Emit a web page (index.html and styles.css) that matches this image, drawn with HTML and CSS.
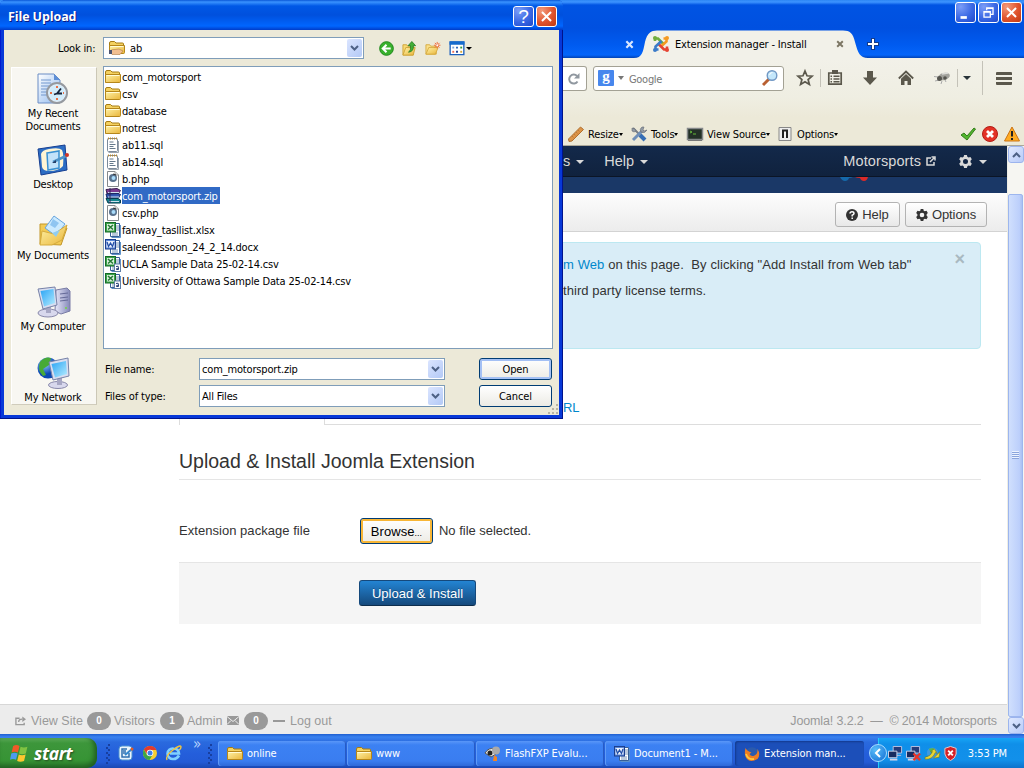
FILE: index.html
```html
<!DOCTYPE html>
<html lang="en">
<head>
<meta charset="utf-8">
<title>Extension manager - Install</title>
<link rel="stylesheet" href="styles.css">
</head>
<body>
<svg class="defs" width="0" height="0" aria-hidden="true">
  <defs>
    <linearGradient id="gold" x1="0" y1="0" x2="1" y2="1"><stop offset="0" stop-color="#fff3a8"/><stop offset="1" stop-color="#e9b53a"/></linearGradient>
    <linearGradient id="screen" x1="0" y1="0" x2="1" y2="1"><stop offset="0" stop-color="#2aa4f4"/><stop offset="1" stop-color="#b5ecff"/></linearGradient>
    <linearGradient id="metal" x1="0" y1="0" x2="1" y2="0"><stop offset="0" stop-color="#e8e8fa"/><stop offset="1" stop-color="#8388b8"/></linearGradient>
    <linearGradient id="sheet" x1="0" y1="0" x2="1" y2="1"><stop offset="0" stop-color="#fff"/><stop offset="1" stop-color="#8fb8ee"/></linearGradient>
    <radialGradient id="globe" cx=".35" cy=".3"><stop offset="0" stop-color="#9ad2ff"/><stop offset="1" stop-color="#0b48b4"/></radialGradient>
    <symbol id="folder" viewBox="0 0 16 16"><path d="M.5 13V3Q.5 1.500 2 1.500h3.500L7 3h6.500q1 0 1 1v9z" fill="#f4d160" stroke="#a67c14"/><path d="M.5 13.500V5.500h15v7q0 1-1 1z" fill="url(#gold)" stroke="#b5861a"/><path d="M1.500 6.500h13" stroke="#fffbd5"/></symbol>
    <symbol id="sql" viewBox="0 0 16 16"><rect x="2.500" y="1.500" width="10" height="13" rx="1" fill="#fff" stroke="#7b8a9a"/><path d="M13.500 4v11.500h-10" fill="none" stroke="#9aa4ae"/><path d="M4.500 5h4M4.500 7.500h6M4.500 9.500h4M4.500 11.500h6" stroke="#65798b"/><path d="M3 1.500h10" stroke="#b88932" stroke-width="2" stroke-dasharray="1 1"/></symbol>
    <symbol id="php" viewBox="0 0 16 16"><path d="M2.500.5h7.500l3.500 3.500v11.500h-11z" fill="#fff" stroke="#85898c"/><path d="M10 .5V4h3.500" fill="#ddd" stroke="#999"/><circle cx="8" cy="7" r="4" fill="#58718d"/><circle cx="8.500" cy="7" r="2" fill="#a8dbfa"/><path d="M8 3l3 1" stroke="#333"/></symbol>
    <symbol id="zip" viewBox="0 0 16 16"><path d="M1 1.500l11-1 3.500 2-2 3H2z" fill="#7d3b91" stroke="#39204f"/><path d="M1 6l12-.5 2.500 1-2 3.500H2z" fill="#3358b3" stroke="#1b2863"/><path d="M1 10.500h12l2.500 1.500v3H3z" fill="#16868e" stroke="#073d50"/><path d="M3 4.500h11M3 9h11M4 13.500h10" stroke="#cfe3ef"/><path d="M5 0v15" stroke="#30265d"/></symbol>
    <symbol id="xls" viewBox="0 0 16 16"><path d="M5.500 1.500h9v13h-9z" fill="#fff" stroke="#375f98"/><path d="M15.500 3v12.500h-9" stroke="#5d91c8" fill="none"/><path d="M11 4h3M11 6h3M11 8h3M7 11h6M7 13h6" stroke="#7795ba"/><rect x=".5" y=".5" width="10" height="9.500" fill="#3ba349" stroke="#166b28"/><rect x="2" y="2" width="7" height="6.500" fill="#dff2e0"/><path d="M3 3l5 4.500M8 3L3 7.500" stroke="#257a35" stroke-width="1.600"/></symbol>
    <symbol id="csv" viewBox="0 0 16 16"><use href="#xls"/><rect x="9.500" y="8" width="6" height="7.500" fill="#fff" stroke="#5f7fa8"/><path d="M11 10.500q3-1 2.500 1v2h-2q-1-1 2-1.500" fill="none" stroke="#253e78"/></symbol>
    <symbol id="doc" viewBox="0 0 16 16"><path d="M5.500 1.500h9v13h-9z" fill="#fff" stroke="#375f98"/><path d="M15.500 3v12.500h-9" stroke="#5d91c8" fill="none"/><path d="M11 4h3M11 6h3M11 8h3M7 11h6M7 13h6" stroke="#7795ba"/><rect x=".5" y=".5" width="10" height="9.500" fill="#5a87d6" stroke="#1c3f8e"/><rect x="1.500" y="2" width="8" height="6.500" fill="#e9f0fc"/><path d="M2 3l1.500 4.500 2-3.500 2 3.500L9 3" fill="none" stroke="#2350a8" stroke-width="1.300"/></symbol>
    <symbol id="monitor" viewBox="0 0 32 32"><ellipse cx="11" cy="27" rx="10" ry="4" fill="#d8d8ed" stroke="#8888aa"/><path d="M9 19h5v8H9z" fill="#a7a7c4"/><path d="M1 3l17-2 2 18-14 4z" fill="#d8ddf0" stroke="#7782a8"/><path d="M3.500 5l13-2 1.500 14-11 3.500z" fill="url(#screen)"/></symbol>
    <symbol id="chev" viewBox="0 0 9 6"><path d="M1 1l3.500 3.500L8 1" fill="none" stroke="#4d6185" stroke-width="2"/></symbol>
    <symbol id="cog" viewBox="0 0 14 14"><path fill-rule="evenodd" d="M5.500 0h3l.5 2 1.300.7 2-.6L13.800 4.700 12.400 6.200v1.600l1.400 1.500-1.500 2.600-2-.6-1.300.7-.5 2h-3l-.5-2-1.300-.7-2 .6L.2 9.300l1.400-1.500V6.200L.2 4.700l1.500-2.600 2 .6L5 2zM7 4.300a2.700 2.700 0 100 5.400 2.700 2.700 0 000-5.400z"/></symbol>
    <symbol id="pcs" viewBox="0 0 16 16"><path d="M5.500.5h9v7h-9z" fill="#253b78" stroke="#c0c5e3"/><path d="M9 8v2h5" stroke="#b8bddb" fill="none"/><path d="M.5 5.500h9v7h-9z" fill="#182b60" stroke="#d4d7ec"/><path d="M2 14.500h8" stroke="#d0d3e9" stroke-width="2"/></symbol>
    <symbol id="close" viewBox="0 0 10 10"><path d="M1.500 1.500l7 7M8.500 1.500l-7 7" fill="none" stroke="currentColor" stroke-width="2.400"/></symbol>
  </defs>
</svg>

<div class="desktop">
<div class="browser">
  <div class="tabstrip">
    <svg class="old-close" viewBox="0 0 10 10"><use href="#close"/></svg>
    <div class="tab">
      <svg class="tab-shape" viewBox="0 0 234 28"><path d="M0 28C8 28 9 22 11 12C13 3 17 .5 23 .5H209C216 .5 219 3 221 12C224 23 226 28 234 28z" fill="#f2f1e9"/></svg>
      <svg class="joomla" viewBox="0 0 16 16" fill="none" stroke-width="2.600"><path d="M2 5V2.500h3L11 8.500" stroke="#72ad3e"/><path d="M10.500 2.500h3v3L7.500 11" stroke="#f59a23"/><path d="M14 10.500v3h-3L5 7.500" stroke="#e64433"/><path d="M5.500 13.500h-3v-3L8.500 5" stroke="#3b7bc8"/><g stroke="none"><circle cx="2" cy="2" r="2" fill="#72ad3e"/><circle cx="14" cy="2" r="2" fill="#f59a23"/><circle cx="14" cy="14" r="2" fill="#e64433"/><circle cx="2" cy="14" r="2" fill="#3b7bc8"/></g></svg>
      <span class="ui tab-title">Extension manager - Install</span>
      <svg class="tab-close" viewBox="0 0 10 10"><use href="#close"/></svg>
    </div>
    <svg class="newtab" viewBox="0 0 12 12"><path d="M6 0v12M0 6h12" stroke="#123b8b" stroke-width="4"/><path d="M6 1v10M1 6h10" stroke="#fff" stroke-width="2"/></svg>
    <div class="winbtns">
      <span class="wb"><svg viewBox="0 0 21 21"><path d="M5 16h7" stroke="#fff" stroke-width="3"/></svg></span>
      <span class="wb"><svg viewBox="0 0 21 21"><path d="M8.500 8V5.500h7v7H13M5.500 9.500h7v6h-7zM8 6h8M5 10h8" fill="none" stroke="#fff" stroke-width="1.400"/></svg></span>
      <span class="wb red"><svg viewBox="0 0 21 21"><path d="M5.500 5.500l10 10M15.500 5.500l-10 10" stroke="#fff" stroke-width="2.200"/></svg></span>
    </div>
  </div>

  <div class="navbar">
    <div class="urlend"><svg viewBox="0 0 12 12"><path d="M9.500 8.500A4.500 4.500 0 119 3" fill="none" stroke="#9098a0" stroke-width="2"/><path d="M11.500 0v5.500H6z" fill="#9098a0"/></svg></div>
    <div class="search">
      <span class="g">g</span><i class="tri grey"></i><span class="ui google">Google</span>
      <svg class="lens" viewBox="0 0 16 16"><path d="M1 15l6-6" stroke="#b96032" stroke-width="3"/><circle cx="10" cy="5.500" r="4.800" fill="#c4e7fb" stroke="#7198c4" stroke-width="1.400"/><path d="M7.500 5q.5-2.500 3-2.500" stroke="#fff" fill="none"/></svg>
    </div>
    <svg class="nv star" viewBox="0 0 16 16"><path d="M8 1l2 4.800 5 .4-3.900 3.300 1.300 5L8 11.800l-4.400 2.700 1.300-5L1 6.200l5-.4z" fill="none" stroke="#5b584c" stroke-width="1.700"/></svg>
    <i class="vsep s1"></i>
    <svg class="nv clip" viewBox="0 0 16 16"><path d="M1.800 3h12.400v11.200H1.800z" fill="none" stroke="#5b584c" stroke-width="1.700"/><path d="M5 0h6v4H5zM3.500 5.500h1.500v1.500H3.500zM6.500 5.500h6V7h-6zM3.500 8.300H5v1.500H3.500zM6.500 8.300h6v1.500h-6zM3.500 11H5v1.500H3.500zM6.500 11h6v1.500h-6z" fill="#5b584c"/></svg>
    <svg class="nv down" viewBox="0 0 16 16"><path d="M5 1h6v6.500h4L8 15 1 7.500h4z" fill="#5b584c"/></svg>
    <svg class="nv home" viewBox="0 0 16 16"><path d="M.8 8.500L8 1.500l7.200 7" fill="none" stroke="#5b584c" stroke-width="1.800"/><path d="M3 8.800L8 4l5 4.800V15H9.500v-4h-3v4H3z" fill="#5b584c"/></svg>
    <svg class="nv fly" viewBox="0 0 16 16"><path d="M0 6.500l4 .5M1 11l4-1M7 14l1-3M12 12l-1-2" fill="none" stroke="#aaa"/><ellipse cx="10" cy="6.500" rx="6" ry="3.500" transform="rotate(-15 10 6.500)" fill="#a2a29c"/><path d="M8 4l6-1" stroke="#dcdcd8" stroke-width="1.500"/><circle cx="5.500" cy="8.500" r="2.500" fill="#55554f"/><circle cx="11" cy="8" r="1.800" fill="#55554f"/></svg>
    <i class="vsep s2"></i><i class="tri dark"></i><i class="vsep tall"></i>
    <i class="burger"></i>
  </div>

  <div class="devbar ui">
    <svg class="d-icon" viewBox="0 0 16 16"><path d="M.5 13L12.500 1l3 2.500L4 15l-3 .500z" fill="#dc9448" stroke="#b07030"/><path d="M4 10l1.500 1.500M6 8l1.500 1.500M8 6l1.500 1.500M10 4l1.500 1.500" stroke="#b57535" stroke-width=".8"/></svg>
    <span class="w-resize">Resize<i class="tri tiny"></i></span>
    <svg class="d-icon" viewBox="0 0 16 16"><path d="M2 2l11 11" stroke="#777d84" stroke-width="2"/><path d="M9 9l5 5" stroke="#356eb5" stroke-width="4"/><path d="M2 14L11 5" stroke="#6f8fb8" stroke-width="3"/><path d="M10 6l2-2" stroke="#888" stroke-width="3"/><path d="M11 1q-3 2-1 5 4 2 6-2l-3 1-1-1 1-3zM1 2l3 1 1 2-2 1-2-1z" fill="#929ba5" stroke="#666c75" stroke-width=".6"/></svg>
    <span class="w-tools">Tools<i class="tri tiny"></i></span>
    <svg class="d-icon" viewBox="0 0 16 16"><path d="M.5 2.500h15v11H.5z" fill="#233026" stroke="#85888a" stroke-width="1.500"/><path d="M3 5l2 1-2 1M6 8h3" stroke="#65b93a" fill="none"/><path d="M1 14.500h14" stroke="#777"/></svg>
    <span class="w-view">View Source<i class="tri tiny"></i></span>
    <svg class="d-icon" viewBox="0 0 16 16"><path d="M2 1.500h12v13H2z" fill="#eee" stroke="#888"/><path d="M6 12V4.500h4V12" fill="none" stroke="#222" stroke-width="2"/><path d="M8 6v5" stroke="#fff"/><path d="M2 14.500h12" stroke="#888"/></svg>
    <span class="w-options">Options<i class="tri tiny"></i></span>
    <svg class="status" viewBox="0 0 16 16"><path d="M1 9l3-2 3 3 7-8 1.500 1L7 14z" fill="#52b52e" stroke="#337e19"/></svg>
    <svg class="status" viewBox="0 0 16 16"><circle cx="8" cy="8" r="7.500" fill="#e33226" stroke="#b21c14"/><path d="M5 5l6 6M11 5l-6 6" stroke="#fff" stroke-width="2.800"/></svg>
    <svg class="status" viewBox="0 0 16 16"><path d="M8 1l7.500 14H.5z" fill="#ffac23" stroke="#cb7414"/><path d="M8 5v5.500M8 12v2" stroke="#222" stroke-width="2"/></svg>
  </div>

  <div class="view">
    <div class="page">
      <div class="jnav"><span>s</span><i class="tri jt"></i><span class="jhelp">Help</span><i class="tri jt"></i>
        <span class="jsite">Motorsports</span>
        <svg class="ext" viewBox="0 0 10 10"><path d="M5 2H1v7h7V6M4 6l4-4M5.500 1H9v3.500" fill="none" stroke="#d9d9d9" stroke-width="1.500"/></svg>
        <svg class="jcog" viewBox="0 0 14 14" fill="#d9d9d9"><use href="#cog"/></svg><i class="tri jt last"></i></div>
      <div class="jhead"><svg viewBox="0 0 30 5"><path d="M1 0h13q-2 1-4 1-1 3-4 3T1 0z" fill="#1569aa"/><path d="M16 0h13q-1 4-4 4t-4-3q-3 0-5-1z" fill="#dc2a28"/></svg></div>
      <div class="subhead">
        <span class="btn b-help"><svg viewBox="0 0 12 12"><circle cx="6" cy="6" r="6" fill="#333"/><path d="M4 4.500Q4 2.800 6 2.800t2 1.700Q8 5.500 6.200 6.200V7.500M6.200 8.500V10" fill="none" stroke="#fff" stroke-width="1.500"/></svg>Help</span>
        <span class="btn b-opt"><svg viewBox="0 0 14 14" fill="#333"><use href="#cog"/></svg>Options</span>
      </div>
      <div class="alert">
        <p><span class="a1"><a>m Web</a> on this page.&nbsp; By clicking "Add Install from Web tab"</span></p>
        <p><span class="a2">third party license terms.</span></p>
        <span class="x">×</span>
      </div>
      <div class="tabs"><span class="tabs-active"></span><span class="tabs-rest"><a>RL</a></span></div>
      <div class="form">
        <h2><span>Upload &amp; Install Joomla Extension</span></h2>
        <div class="row"><span class="label">Extension package file</span><span class="browse">Browse<small>...</small></span><span class="nofile">No file selected.</span></div>
        <div class="actions"><span class="primary">Upload &amp; Install</span></div>
      </div>
      <div class="jfoot">
        <svg class="f-share" viewBox="0 0 12 10"><path d="M5 2H1v7h9V7M4 6q0-3 4-3" fill="none" stroke="#999" stroke-width="1.500"/><path d="M8 0l4 3-4 3z" fill="#999"/></svg>
        <span class="f1">View Site</span><b>0</b><span class="f2">Visitors</span><b>1</b><span class="f3">Admin</span>
        <svg class="f-mail" viewBox="0 0 12 9"><path d="M0 0h12v9H0z" fill="#999"/><path d="M0 .5l6 5 6-5M0 8.500l4-4M12 8.500l-4-4" stroke="#ededed" fill="none"/></svg>
        <b>0</b><i class="dash"></i><span class="f4">Log out</span>
        <span class="copy">Joomla! 3.2.2 &nbsp;— &nbsp;© 2014 Motorsports</span>
      </div>
    </div>
    <div class="scroll">
      <span class="sbtn"><svg class="up" viewBox="0 0 9 6"><use href="#chev"/></svg></span>
      <span class="thumb"><i></i></span>
      <span class="sbtn"><svg viewBox="0 0 9 6"><use href="#chev"/></svg></span>
    </div>
  </div>
</div>

<div class="taskbar ui">
  <div class="start"><svg viewBox="0 0 18 18"><path d="M3 2q3-2 6 0L7.500 8q-3-1.500-6 0z" fill="#f05a28"/><path d="M10 2.500q3 1.500 6.500 0L15 9q-3.500 1.500-6.500 0z" fill="#80c342"/><path d="M1.200 9q3-1.500 6 0L5.700 15q-3-1.500-5.700 0z" fill="#4d9bf0"/><path d="M8.300 10q3 1.500 6.500 0l-1.500 6q-3.500 1.500-6.500 0z" fill="#fdc72f"/></svg><span>start</span></div>
  <i class="grip"></i>
  <svg class="ql" viewBox="0 0 16 16"><rect x="1" y="1" width="13" height="14" rx="3" fill="#eaf4fb" stroke="#4f93d0"/><path d="M9 4H4v8h7V8M5 6h3M5 8h3" stroke="#2f6fb0" fill="none" stroke-width="1.500"/><path d="M7 10l7-6" stroke="#3387ce" stroke-width="2"/><circle cx="14" cy="4" r="1.500" fill="#e75a22"/></svg>
  <svg class="ql" viewBox="0 0 16 16"><circle cx="8" cy="8" r="7" fill="#f7ce30"/><path d="M1.900 4.500A7 7 0 0114.400 5H8L5 9z" fill="#e13a2d"/><path d="M1.900 4.500A7 7 0 007.500 15L10.500 10H5z" fill="#3ba648"/><circle cx="8" cy="8" r="3.300" fill="#fff"/><circle cx="8" cy="8" r="2.500" fill="#3d80ea"/></svg>
  <svg class="ql" viewBox="0 0 16 16"><path d="M13 10.500Q11 14 7.500 14A5.300 5.300 0 117.500 3.500q5 0 5.500 5H4" fill="none" stroke="#7fd0ff" stroke-width="2.600"/><path d="M1 15Q-1 11 7 5t8-3q0 2-2 3" fill="none" stroke="#f5c73d" stroke-width="1.400"/></svg>
  <span class="more">»</span>
  <i class="grip g2"></i>
  <div class="task t1"><svg viewBox="0 0 16 16"><use href="#folder"/></svg><span>online</span></div>
  <div class="task t2"><svg viewBox="0 0 16 16"><use href="#folder"/></svg><span>www</span></div>
  <div class="task t3"><svg viewBox="0 0 16 16"><path d="M0 7q4-6 9-4l2 5-5 3z" fill="#e5e5e2" stroke="#555"/><circle cx="5" cy="7" r="2.500" fill="#222"/><circle cx="11" cy="4.500" r="4" fill="#aaa"/><path d="M8 15l1-6 3 2v4z" fill="#f18425"/></svg><span>FlashFXP Evalu...</span></div>
  <div class="task t4"><svg viewBox="0 0 16 16"><use href="#doc"/></svg><span>Document1 - M...</span></div>
  <div class="task t5 active"><svg viewBox="0 0 16 16"><circle cx="8" cy="8" r="6.800" fill="#2a5aad"/><path d="M1.500 2Q-.5 9 3 13t10.500 0Q17 8.500 13.500 3q.5 5-3 6.500T5.500 8l2-1.500Q3 5 1.500 2z" fill="#ef7d22"/><path d="M2 8q2 6 8 5" fill="none" stroke="#ffc83e" stroke-width="1.800"/></svg><span>Extension man...</span></div>
  <div class="tray">
    <span class="collapse"><svg viewBox="0 0 8 10"><path d="M6 1L2 5l4 4" fill="none" stroke="#fff" stroke-width="2"/></svg></span>
    <svg class="ti" viewBox="0 0 16 16"><use href="#pcs"/></svg>
    <svg class="ti n2" viewBox="0 0 16 16"><use href="#pcs"/><path d="M8 8l7 7M15 8l-7 7" stroke="#e8352a" stroke-width="2.500"/></svg>
    <svg class="ti" viewBox="0 0 16 16"><circle cx="8" cy="7.500" r="6" fill="#3f9adf"/><path d="M4 3l5-1 2 4-4 2z" fill="#54b64d"/><path d="M0 12q6-1 8-6l-2 0 4-3 3 5-2-1Q8 15 0 14zM9 13l7-7-1 6z" fill="#ead431" stroke="#6b751e" stroke-width=".6"/></svg>
    <svg class="ti" viewBox="0 0 16 16"><path d="M8 .5l6 2v6q-1 5-6 7-5-2-6-7v-6z" fill="#d52027" stroke="#e8d1d1"/><path d="M5.500 5l5 5M10.500 5l-5 5" stroke="#fff" stroke-width="2"/></svg>
    <span class="clock">3:53 PM</span>
  </div>
</div>

<div class="dialog ui">
  <div class="dtitle"><span>File Upload</span><i class="wb q">?</i><i class="wb red"><svg viewBox="0 0 21 21"><path d="M5.500 5.500l10 10M15.500 5.500l-10 10" stroke="#fff" stroke-width="2.200"/></svg></i></div>
  <div class="dbody">
    <div class="lookin">
      <span class="look-label">Look in:</span>
      <div class="combo c-look"><svg class="ci" viewBox="0 0 16 16"><use href="#folder"/><path d="M1 11q2-2 5-1.500l4-.5 4 2-3 3.500H3z" fill="#f2bf91" stroke="#b07a45" stroke-width=".6"/><path d="M0 10h3v4H0z" fill="#4d5470"/></svg><span>ab</span><i class="drop"><svg viewBox="0 0 9 6"><use href="#chev"/></svg></i></div>
      <svg class="tool back" viewBox="0 0 16 16"><circle cx="8" cy="8" r="7.300" fill="#38b02c" stroke="#1b8418"/><path d="M12.500 8H5M8 4L4 8l4 4" fill="none" stroke="#fff" stroke-width="2.200"/></svg>
      <svg class="tool" viewBox="0 0 16 16"><path d="M1 15V4h4l1 1.500h6V15z" fill="#f7da74" stroke="#d0a437"/><path d="M1 15l3-8h10l-2 8z" fill="url(#gold)" stroke="#d0a437"/><path d="M7 12q3-2 2-7H6.500L10.500.5l4 4.500H12q1 6-5 7z" fill="#42ae38" stroke="#1b761c" stroke-width=".8"/></svg>
      <svg class="tool" viewBox="0 0 16 16"><path d="M1 14V4h4l1 1.500h6V14z" fill="#fae08a" stroke="#d6ac42"/><path d="M1 14l3-7h10l-3 7z" fill="url(#gold)" stroke="#d6ac42"/><path d="M13 1v7M9.500 4.500h7M10.500 2l5 5M15.500 2l-5 5" stroke="#f06638"/><circle cx="13" cy="4.500" r="1" fill="#fff"/></svg>
      <svg class="tool views" viewBox="0 0 16 16"><path d="M.7 1h14.600v13.500H.7z" fill="#fff" stroke="#1a60bd" stroke-width="1.400"/><path d="M0 .5h16V4H0z" fill="#156bcd"/><path d="M3 6h2v2H3z" fill="#7aa0d5"/><path d="M7 6h2v2H7z" fill="#2460b7"/><path d="M11.500 6h2v2h-2z" fill="#2d9a3b"/><path d="M3 10.500h2v2H3z" fill="#ee6b52"/><path d="M7 10.500h2v2H7z" fill="#163990"/><path d="M11.500 10.500h2v2h-2z" fill="#d8a431"/></svg>
      <i class="tri vtri"></i>
    </div>
    <div class="main">
      <div class="places">
        <div class="place"><svg viewBox="0 0 32 32"><path d="M1 1h16l6 6v23H1z" fill="url(#sheet)" stroke="#6a8cc4"/><path d="M17 1v6h6" fill="#5e8fd6"/><path d="M4 7h10M4 10h10M4 13h8M4 16h6M4 19h6M4 22h7" stroke="#7398ce"/><circle cx="20" cy="20" r="10" fill="#e4effa" stroke="#95999f" stroke-width="2"/><circle cx="20" cy="20" r="8" fill="#d3ecfb"/><path d="M17 21.500l3-1 4-5M20 20.500h5" fill="none" stroke="#17243b" stroke-width="1.800"/><path d="M20 13v2M20 25v2M13 20h2M26 20h1" stroke="#ed7044" stroke-width="2"/></svg><span>My Recent<br>Documents</span></div>
        <div class="place"><svg viewBox="0 0 32 32"><path d="M1 5l27-4 2 25-26 5z" fill="#2c6dc4" stroke="#173f91"/><path d="M4 10q1-4 8-5 10-2 13 1 2 4 1 16-4 5-14 5-6 0-7-4z" fill="#fff5d4"/><path d="M10 9l12-2v17l-11 2z" fill="#c2e3fa" stroke="#3991d3" stroke-width="1.500"/><path d="M16 18l13-6" stroke="#4e94c8" stroke-width="2.500"/><path d="M15 19l4-3v3z" fill="#253f68"/><circle cx="30" cy="11" r="2" fill="#d03424"/></svg><span>Desktop</span></div>
        <div class="place"><svg viewBox="0 0 32 32"><path d="M3 29V9h9l3 4h15l-6 17z" fill="#f3ca54" stroke="#c3972a"/><path d="M17 1l11 8-9 12L8 13z" fill="#cbeaff" stroke="#68a5de"/><path d="M16 4l6 4-4 5-5-3z" fill="#8fc5f1"/><path d="M3 30l2-14 12 3 13-9-5 15-10 5z" fill="url(#gold)" stroke="#d5ab3d"/><path d="M15 18l8-3-4 7z" fill="#90cdf2"/></svg><span>My Documents</span></div>
        <div class="place"><svg viewBox="0 0 32 32"><path d="M19 4l11-2 3 3v20l-9 3-6-3z" fill="url(#metal)" stroke="#7a7da5"/><path d="M23 8l8-1M23 12l8-1M23 15l8-1" stroke="#656a98"/><circle cx="29" cy="22" r="1" fill="#70d642"/><use href="#monitor"/></svg><span>My Computer</span></div>
        <div class="place"><svg viewBox="0 0 32 32"><circle cx="11" cy="11" r="10.500" fill="url(#globe)"/><path d="M3 5q5-6 11-4l-2 7-6 4 3 6-3 1Q0 13 3 5z" fill="#47aa37"/><ellipse cx="21" cy="28" rx="9.500" ry="3.500" fill="#d8d8ed" stroke="#8888aa"/><path d="M20 20h5v8h-5z" fill="#a7a7c4"/><path d="M12 5l19-4 1 18-16 4z" fill="#d8ddf0" stroke="#7782a8"/><path d="M14.500 7L29 4l1 13-12 3.500z" fill="url(#screen)"/></svg><span>My Network</span></div>
      </div>
      <div class="right">
        <ul class="files">
          <li><svg viewBox="0 0 16 16"><use href="#folder"/></svg><span class="n1">com_motorsport</span></li>
          <li><svg viewBox="0 0 16 16"><use href="#folder"/></svg><span>csv</span></li>
          <li><svg viewBox="0 0 16 16"><use href="#folder"/></svg><span>database</span></li>
          <li><svg viewBox="0 0 16 16"><use href="#folder"/></svg><span>notrest</span></li>
          <li><svg viewBox="0 0 16 16"><use href="#sql"/></svg><span>ab11.sql</span></li>
          <li><svg viewBox="0 0 16 16"><use href="#sql"/></svg><span>ab14.sql</span></li>
          <li><svg viewBox="0 0 16 16"><use href="#php"/></svg><span>b.php</span></li>
          <li class="sel"><svg viewBox="0 0 16 16"><use href="#zip"/></svg><span>com_motorsport.zip</span></li>
          <li><svg viewBox="0 0 16 16"><use href="#php"/></svg><span>csv.php</span></li>
          <li><svg viewBox="0 0 16 16"><use href="#xls"/></svg><span>fanway_tasllist.xlsx</span></li>
          <li><svg viewBox="0 0 16 16"><use href="#doc"/></svg><span>saleendssoon_24_2_14.docx</span></li>
          <li><svg viewBox="0 0 16 16"><use href="#csv"/></svg><span>UCLA Sample Data 25-02-14.csv</span></li>
          <li><svg viewBox="0 0 16 16"><use href="#csv"/></svg><span>University of Ottawa Sample Data 25-02-14.csv</span></li>
        </ul>
        <div class="bottom">
          <span class="bl">File name:</span><div class="combo">com_motorsport.zip<i class="drop"><svg viewBox="0 0 9 6"><use href="#chev"/></svg></i></div><span class="xpbtn default">Open</span>
          <span class="bl">Files of type:</span><div class="combo">All Files<i class="drop"><svg viewBox="0 0 9 6"><use href="#chev"/></svg></i></div><span class="xpbtn">Cancel</span>
        </div>
      </div>
    </div>
    <svg class="sizer" viewBox="0 0 12 12" fill="#b8b4a3"><path d="M9 1h2v2H9zM9 5h2v2H9zM9 9h2v2H9zM5 5h2v2H5zM5 9h2v2H5zM1 9h2v2H1z"/></svg>
  </div>
</div>
</div>
</body>
</html>
```

FILE: styles.css
```css
* { box-sizing: border-box; }
body { margin: 0; width: 1024px; height: 768px; overflow: hidden; font-family: "Liberation Sans", Arial, sans-serif; font-size: 13px; color: #333; }
i { font-style: normal; }
svg { display: block; flex: none; overflow: visible; }
.defs { position: absolute; }
.desktop { position: relative; width: 1024px; height: 768px; display: flex; flex-direction: column; }
.ui { font-family: "DejaVu Sans Condensed", "DejaVu Sans", sans-serif; font-stretch: condensed; font-size: 11px; letter-spacing: -0.16px; color: #000; white-space: nowrap; }
.tri { display: inline-block; width: 0; height: 0; flex: none; border: 4px solid transparent; border-bottom: 0; border-top-color: #000; }

/* browser window */
.browser { height: 734px; display: flex; flex-direction: column; }
.tabstrip { height: 58px; display: flex; padding-left: 625px; background: linear-gradient(#2c86f4 0, #3d94ff 2px, #0054e3 5px, #0050e0 28px, #005bf0 45px, #0465fa 55px, #0142b5 58px); }
.old-close { width: 9px; height: 9px; margin: 40px 0 0 0; color: #d9e7ff; }
.tab { position: relative; width: 234px; height: 28px; margin-top: 30px; display: flex; align-items: center; padding-left: 19px; }
.tab-shape { position: absolute; left: 0; top: 0; width: 234px; height: 28px; }
.joomla { position: relative; width: 16px; height: 16px; margin-right: 6px; }
.tab-title { position: relative; width: 132px; }
.tab-close { position: relative; width: 8px; height: 8px; margin-left: 29px; color: #7c7663; }
.newtab { width: 12px; height: 12px; margin: 38px 0 0 -1px; }
.winbtns { margin-left: auto; display: flex; gap: 2px; padding: 2px 2px 0 0; }
.wb { display: block; width: 21px; height: 21px; border: 1px solid #fff; border-radius: 3px; background: radial-gradient(circle at 25% 20%, #7b9df7, #3a68e4 55%, #1e48ca); }
.wb svg { width: 19px; height: 19px; }
.wb.red { background: radial-gradient(circle at 25% 20%, #f39a7b, #e0532d 55%, #c03912); }
.navbar { height: 40px; display: flex; align-items: center; background: linear-gradient(#f2f1e9, #efeee2); }
.urlend { width: 24px; height: 25px; margin-left: 563px; background: #fff; border: 1px solid #a3a194; border-left: 0; border-radius: 0 3px 3px 0; padding: 6px 0 0 5px; }
.urlend svg { width: 12px; height: 12px; }
.search { width: 191px; height: 25px; margin-left: 6px; background: #fff; border: 1px solid #a3a194; border-radius: 3px; display: flex; align-items: center; padding-left: 4px; }
.g { width: 16px; height: 16px; background: #4787ed; color: #fff; font: bold 15px/12px "Liberation Serif", serif; text-align: center; border-radius: 1px; }
.tri.grey { margin: 0 5px 0 4px; border-width: 4px 3px 0; border-top-color: #777; }
.google { color: #777; width: 129px; padding-top: 2px; letter-spacing: -.3px; }
.lens { width: 16px; height: 16px; margin-left: 4px; }
.nv { width: 16px; height: 16px; }
.star { margin-left: 13px; }
.vsep { width: 1px; height: 18px; background: #c4c2b8; }
.s1 { margin-left: 7px; }
.clip { margin-left: 6px; }
.down, .home, .fly { margin-left: 19px; }
.home { margin-left: 20px; }
.fly { margin-left: 20px; }
.s2 { margin-left: 7px; }
.dark { margin-left: 5px; border-top-color: #283338; }
.tall { height: 34px; margin-left: 11px; }
.burger { width: 16px; height: 13px; margin-left: 13px; border-top: 3px solid #5b584c; border-bottom: 3px solid #5b584c; background: linear-gradient(transparent 2px, #5b584c 2px, #5b584c 5px, transparent 5px); border-radius: 1px; }
.devbar { height: 48px; display: flex; align-items: center; padding: 25px 3px 0 568px; background: linear-gradient(#efeee2, #ece9d8 40%); border-bottom: 1px solid #aca899; }
.d-icon { width: 16px; height: 16px; margin-right: 4px; }
.devbar .tri { border-width: 3px 2px 0; margin-left: 0; vertical-align: 2px; }
.w-resize { width: 43px; } .w-tools { width: 36px; } .w-view { width: 70px; } .w-options { width: 163px; }
.status { width: 16px; height: 16px; margin-right: 6px; }
.status:last-child { margin-right: 0; }
.view { flex: 1; display: flex; background: #fff; }
.page { width: 1007px; display: flex; flex-direction: column; }

/* administration page */
.page a { color: #08c; }
.jnav { height: 31px; display: flex; align-items: center; padding-left: 563px; background: linear-gradient(#13294a, #10223e); border-bottom: 1px solid #0b1526; color: #d9d9d9; font-size: 14.5px; }
.jt { border-top-color: #d9d9d9; margin-left: 6px; margin-top: 2px; }
.jhelp { margin-left: 20px; }
.jsite { margin-left: auto; letter-spacing: .1px; }
.ext { width: 10px; height: 10px; margin-left: 5px; }
.jcog { width: 13px; height: 13px; margin-left: 23px; }
.last { margin: 2px 20px 0 7px; }
.jhead { height: 16px; background: #1a3867; padding-left: 839px; }
.jhead svg { width: 30px; height: 5px; }
.subhead { height: 39px; display: flex; gap: 5px; justify-content: flex-end; padding: 9px 20px 0 0; background: linear-gradient(#fdfdfd, #ececec); border-bottom: 1px solid #d3d3d3; }
.btn { height: 25px; border: 1px solid #b3b3b3; border-radius: 3px; background: linear-gradient(#fff, #e8e8e8); display: flex; align-items: center; justify-content: center; gap: 4px; letter-spacing: -.1px; }
.btn svg { width: 12px; height: 12px; }
.b-help { width: 65px; } .b-opt { width: 82px; }
.alert { position: relative; height: 107px; margin: 10px 26px 0 26px; padding: 9px 0 0 536px; background: #d9edf7; border: 1px solid #bce8f1; border-radius: 4px; }
.alert p { margin: 0; line-height: 26px; white-space: nowrap; }
.a1 { letter-spacing: .1px; } .a2 { letter-spacing: .06px; }
.x { position: absolute; right: 15px; top: 4px; font: bold 18px/24px "Liberation Sans", sans-serif; color: #a9b9c1; }
.tabs { height: 76px; margin: 0 26px 0 179px; display: flex; padding-top: 40px; }
.tabs-active { width: 145px; border-left: 1px solid #ddd; }
.tabs-rest { flex: 1; border-left: 1px solid #ddd; border-bottom: 1px solid #ddd; padding: 11px 0 0 238px; letter-spacing: -.2px; }
.form { margin: 0 26px 0 179px; }
h2 { margin: 0; height: 55px; border-bottom: 1px solid #e5e5e5; font-size: 19.5px; font-weight: normal; line-height: 24px; padding-top: 24px; }
.row { height: 82px; display: flex; align-items: center; padding-top: 19px; }
.label { width: 181px; letter-spacing: .04px; }
.browse { width: 73px; height: 26px; border: 1px solid #003c74; border-radius: 3px; box-shadow: inset 0 0 0 2px #f8b636; background: linear-gradient(#fff, #ecebe5); text-align: center; line-height: 25px; color: #000; letter-spacing: .05px; }
.browse small { font-size: 9px; }
.nofile { margin-left: 6px; letter-spacing: -.02px; }
.actions { height: 62px; background: #f5f5f5; border-top: 1px solid #e5e5e5; padding: 17px 0 0 180px; }
.primary { display: block; width: 117px; height: 26px; border: 1px solid #15497c; border-bottom-color: #0d2d4c; border-radius: 3px; background: linear-gradient(#2384d3, #15497c); color: #fff; text-align: center; line-height: 25px; letter-spacing: 0; text-shadow: 0 -1px 0 rgba(0,0,0,.25); }
.jfoot { margin-top: auto; height: 30px; display: flex; align-items: center; background: #ececec; border-top: 1px solid #d7d7d7; padding: 2px 10px 0 15px; color: #999; font-size: 12.5px; }
.jfoot b { width: 24px; height: 18px; border-radius: 9px; background: #999; color: #fff; font-size: 10px; line-height: 18px; text-align: center; }
.f-share { width: 11px; height: 10px; margin-right: 5px; }
.f1 { width: 56px; } .f2 { width: 49px; padding-left: 3px; } .f3 { width: 43px; padding-left: 3px; }
.f-mail { width: 12px; height: 9px; margin-right: 5px; }
.dash { width: 12px; height: 2px; background: #999; margin: 0 5px 0 5px; }
.copy { margin-left: auto; letter-spacing: -.13px; }
.scroll { width: 17px; display: flex; flex-direction: column; justify-content: space-between; background: #f6f6f2; border-left: 1px solid #eeede5; }
.sbtn { height: 17px; display: flex; align-items: center; justify-content: center; border: 1px solid #9cb4ee; border-radius: 3px; background: linear-gradient(135deg, #e0e9ff, #b8cbf8); }
.sbtn svg, .drop svg { width: 9px; height: 6px; }
.sbtn .up { transform: rotate(180deg); }
.thumb { height: 523px; margin-top: 30px; margin-right: 1px; border: 1px solid #9db6ee; border-radius: 2px; background: linear-gradient(90deg, #d0dffd, #bccffb 80%, #a9c0f2); display: flex; align-items: center; justify-content: center; }
.thumb i { width: 7px; height: 8px; background: repeating-linear-gradient(#edf3ff 0 1px, #8ba5dd 1px 2px); }

/* taskbar */
.taskbar { height: 34px; display: flex; color: #fff; padding-top: 4px; background: linear-gradient(#1f5fd0, #3a82f0 3px, #2a6ade 8px, #245edb 20px, #235bd6 28px, #1a48b2); }
.start { width: 97px; height: 30px; border-radius: 0 10px 10px 0; display: flex; align-items: center; background: linear-gradient(#5fad5b, #3d963b 5px, #379435 22px, #2c7a2b); box-shadow: inset -3px -2px 5px #205f21; padding-left: 10px; }
.start svg { width: 19px; height: 19px; }
.start span { font: italic bold 17.500px/28px "Open Sans", sans-serif; letter-spacing: -.4px; margin-left: 5px; text-shadow: 1px 1px 2px #244b20; }
.grip { width: 4px; height: 20px; margin: 6px 0 0 9px; background: repeating-conic-gradient(#183f9f 0 25%, transparent 0 50%) 0 0 / 4px 5px; }
.ql { width: 16px; height: 16px; margin: 7px 0 0 8px; }
.more { margin: -3px 0 0 11px; width: 10px; font-size: 15px; color: #b7d3ff; }
.grip.g2 { margin-left: 5px; }
.task { width: 128px; height: 25px; margin: 3px 1px 0 0; border-radius: 3px; background: linear-gradient(#5a97f8, #3c81f3 4px, #3a7df0 20px, #2f69d8); box-shadow: inset 1px 0 #5f9bf7, inset -1px 0 #275bc5; display: flex; align-items: center; padding: 0 0 0 9px; gap: 4px; font-size: 11px; letter-spacing: -.1px; }
.task svg { width: 16px; height: 16px; }
.t1 { margin-left: 6px; }
.active { background: #1c4fb9; box-shadow: inset 1px 1px 2px #133a8c; margin-left: 1px; width: 129px; }
.tray { position: relative; width: 146px; margin-left: auto; display: flex; align-items: center; padding: 0 17px 0 9px; background: linear-gradient(#17a5f5, #0f8fe9 6px, #1290ea 22px, #0d72cb); border-left: 1px solid #22cdf9; }
.collapse { position: absolute; left: -10px; top: 6px; width: 18px; height: 18px; border-radius: 9px; border: 1px solid #a6dcff; background: radial-gradient(circle at 35% 30%, #59bdf9, #106cd4); padding: 3px 4px; }
.collapse svg { width: 8px; height: 10px; }
.ti { width: 15px; height: 15px; margin-right: 3px; }
.ti.n2 { margin-right: 4px; }
.clock { margin-left: auto; letter-spacing: -.1px; }

/* file dialog */
.dialog { position: absolute; left: 0; top: 0; width: 563px; height: 419px; background: #0738d8; border-radius: 6px 6px 0 0; box-shadow: inset -1px -1px #00138c, inset 1px 0 #0019cf; }
.dtitle { height: 30px; display: flex; align-items: center; padding: 3px 6px 0 8px; gap: 2px; border-radius: 5px 5px 0 0; background: linear-gradient(#0a58d8, #3a93ff 2px, #0058e6 6px, #0050dd 15px, #0066ff 26px, #003cc8); }
.dtitle span { font: bold 12.5px "Open Sans", sans-serif; letter-spacing: -.1px; color: #fff; text-shadow: 1px 1px #0a1883; flex: 1; }
.wb.q { font: 19px/19px "Liberation Sans", sans-serif; color: #fff; text-align: center; }
.dbody { position: relative; height: 385px; margin: 0 4px; background: #ece9d8; }
.lookin { height: 36px; display: flex; align-items: center; padding-left: 54px; }
.look-label { width: 45px; }
.combo { position: relative; height: 22px; background: #fff; border: 1px solid #7f9db9; display: flex; align-items: center; padding-left: 2px; }
.c-look { width: 261px; gap: 5px; padding-left: 5px; }
.ci { width: 16px; height: 16px; }
.drop { width: 15px; height: 18px; margin: 0 1px 0 auto; border-radius: 2px; background: linear-gradient(135deg, #dbe5ff, #b3c9f6); display: flex; align-items: center; justify-content: center; }
.tool { width: 15px; height: 15px; margin-left: 8px; }
.tool.back { margin-left: 15px; }
.tool.views { margin-left: 9px; width: 16px; }
.vtri { margin-left: 1px; border-width: 3px 3px 0; }
.main { display: flex; padding-left: 7px; gap: 6px; }
.places { width: 86px; height: 338px; margin-top: 1px; padding: 5px 2px 0 0; background: #f8f7f2; border: 1px solid #fff; border-right-color: #cbc7b6; border-bottom-color: #d0ccbc; }
.place { height: 71px; display: flex; flex-direction: column; align-items: center; text-align: center; line-height: 13px; gap: 2px; }
.place:last-child { height: 55px; }
.place svg { width: 32px; height: 32px; }
.files { width: 450px; height: 283px; margin: 0; padding: 1px; list-style: none; background: #fff; border: 1px solid #7f9db9; }
.files li { height: 17px; display: flex; align-items: center; }
.files svg { width: 16px; height: 16px; margin: 0 1px 0 0; }
.files span { height: 17px; line-height: 18px; padding: 1px 2px 0 0; }
.sel span { background: #316ac5; color: #fff; }
.bottom { display: grid; grid-template-columns: 94px 246px 73px; row-gap: 5px; padding: 9px 0 0 2px; align-items: center; }
.bottom .combo { height: 22px; padding-top: 1px; }
.bottom .drop { margin-top: -1px; }
.bl { padding-top: 1px; }
.xpbtn { height: 22px; margin-left: 34px; width: 73px; border: 1px solid #003c74; border-radius: 3px; background: linear-gradient(#fff, #ecebe5); text-align: center; line-height: 21px; letter-spacing: -.1px; }
.default { box-shadow: inset 0 0 0 2px #a4c0f4; }
.sizer { position: absolute; right: 0; bottom: 0; width: 12px; height: 12px; }
```
